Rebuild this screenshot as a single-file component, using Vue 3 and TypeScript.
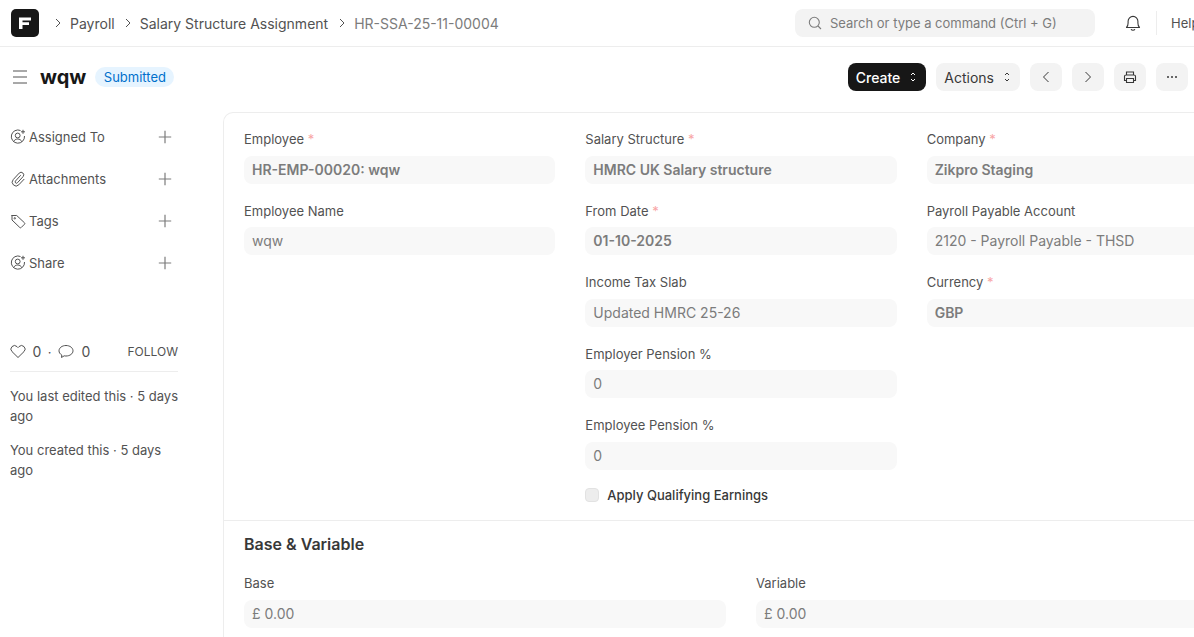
<script setup lang="ts">
interface Field {
  label: string
  value: string
  required?: boolean
  bold?: boolean
}

const columns: Field[][] = [
  [
    { label: 'Employee', value: 'HR-EMP-00020: wqw', required: true, bold: true },
    { label: 'Employee Name', value: 'wqw' }
  ],
  [
    { label: 'Salary Structure', value: 'HMRC UK Salary structure', required: true, bold: true },
    { label: 'From Date', value: '01-10-2025', required: true, bold: true },
    { label: 'Income Tax Slab', value: 'Updated HMRC 25-26' },
    { label: 'Employer Pension %', value: '0' },
    { label: 'Employee Pension %', value: '0' }
  ],
  [
    { label: 'Company', value: 'Zikpro Staging', required: true, bold: true },
    { label: 'Payroll Payable Account', value: '2120 - Payroll Payable - THSD' },
    { label: 'Currency', value: 'GBP', required: true, bold: true }
  ]
]

const pay: Field[] = [
  { label: 'Base', value: '£ 0.00' },
  { label: 'Variable', value: '£ 0.00' }
]

const sideItems = [
  { label: 'Assigned To', icon: 'user' },
  { label: 'Attachments', icon: 'clip' },
  { label: 'Tags', icon: 'tag' },
  { label: 'Share', icon: 'user' }
]
</script>

<template>
  <div class="app">
    <header class="navbar">
      <div class="logo">
        <svg width="14" height="14" viewBox="0 0 14 14"><path d="M1 1.500h12v3H4.500v1.700H11v2.700H4.500V13H1z" fill="#fff" /></svg>
      </div>
      <nav class="crumbs">
        <svg class="chev" width="8" height="10" viewBox="0 0 8 10"><path d="M2 1l4 4-4 4" /></svg>
        <span class="tight">Payroll</span>
        <svg class="chev" width="8" height="10" viewBox="0 0 8 10"><path d="M2 1l4 4-4 4" /></svg>
        <span>Salary Structure Assignment</span>
        <svg class="chev" width="8" height="10" viewBox="0 0 8 10"><path d="M2 1l4 4-4 4" /></svg>
        <span class="current">HR-SSA-25-11-00004</span>
      </nav>
      <div class="search">
        <svg width="14" height="14" viewBox="0 0 14 14" fill="none" stroke="#7c7c7c" stroke-width="1.100"><circle cx="6.300" cy="6.300" r="5" /><path d="M10 10l3 3" /></svg>
        <span>Search or type a command (Ctrl + G)</span>
      </div>
      <svg class="bell" width="16" height="18" viewBox="0 0 16 18" fill="none" stroke="#383838" stroke-width="1.100">
        <path d="M1.500 13.500c1.200-1.200 1.600-2.400 1.600-4.500V7.300a4.900 4.900 0 0 1 9.800 0V9c0 2.100.4 3.300 1.600 4.500z" stroke-linejoin="round" />
        <path d="M6.300 15.600c.4.800 3 .8 3.400 0" stroke-linecap="round" />
      </svg>
      <div class="nav-sep"></div>
      <span class="help">Help</span>
    </header>

    <div class="page-head">
      <div class="title-area">
        <svg width="14" height="14" viewBox="0 0 14 14" fill="none" stroke="#525252" stroke-width="1"><path d="M0 1h14M0 7h14M0 13h14" /></svg>
        <h1>wqw</h1>
        <span class="badge">Submitted</span>
      </div>
      <div class="actions">
        <button class="btn primary">
          Create
          <svg width="8" height="12" viewBox="0 0 8 12" fill="none" stroke="#fff" stroke-width="1"><path d="M2 4l2-2 2 2M2 8l2 2 2-2" /></svg>
        </button>
        <button class="btn">
          Actions
          <svg width="8" height="12" viewBox="0 0 8 12" fill="none" stroke="#383838" stroke-width="1"><path d="M2 4l2-2 2 2M2 8l2 2 2-2" /></svg>
        </button>
        <button class="btn icon">
          <svg width="8" height="12" viewBox="0 0 8 12" fill="none" stroke="#383838" stroke-width="1"><path d="M6.500 1L1.500 6l5 5" /></svg>
        </button>
        <button class="btn icon">
          <svg width="8" height="12" viewBox="0 0 8 12" fill="none" stroke="#383838" stroke-width="1"><path d="M1.500 1l5 5-5 5" /></svg>
        </button>
        <button class="btn icon">
          <svg width="14" height="14" viewBox="0 0 14 14" fill="none" stroke="#383838" stroke-width="1.100"><path d="M3.500 5V2h7v3M3.500 10.500h-2V6.500A1.500 1.500 0 0 1 3 5h8a1.500 1.500 0 0 1 1.500 1.500v4h-2" /><path d="M3.500 8.500h7V12.500h-7z" /></svg>
        </button>
        <button class="btn icon">
          <svg width="12" height="4" viewBox="0 0 12 4" fill="#383838"><circle cx="2" cy="2" r="1" /><circle cx="6" cy="2" r="1" /><circle cx="10" cy="2" r="1" /></svg>
        </button>
      </div>
    </div>

    <div class="body">
      <aside class="sidebar">
        <div v-for="item in sideItems" :key="item.label" class="side-item">
          <div class="side-label">
            <svg v-if="item.icon === 'user'" width="16" height="16" viewBox="0 0 16 16" fill="none" stroke="#525252" stroke-width="1">
              <path d="M10.500 1.500A6.600 6.600 0 1 0 14.500 7" />
              <circle cx="7.700" cy="6.500" r="2.400" />
              <path d="M3.500 13c.7-2 2.300-3 4.200-3s3.400 1 4.200 2.800" />
              <path d="M13 .8v4M11 2.800h4" />
            </svg>
            <svg v-else-if="item.icon === 'clip'" width="16" height="16" viewBox="0 0 16 16" fill="none" stroke="#525252" stroke-width="1">
              <path d="M10.500 4.500L5.500 10a1.300 1.300 0 0 0 1.900 1.800L13 5.700a2.600 2.600 0 0 0-3.800-3.600L3.300 8.500a3.800 3.800 0 0 0 5.500 5.300L14 8.300" stroke-linecap="round" />
            </svg>
            <svg v-else width="16" height="16" viewBox="0 0 16 16" fill="none" stroke="#525252" stroke-width="1">
              <path d="M1.500 2.500h5.200l7.800 7.300a1 1 0 0 1 0 1.400l-3.300 3.300a1 1 0 0 1-1.400 0L2 7V3z" stroke-linejoin="round" />
              <circle cx="4.800" cy="5.300" r=".7" />
            </svg>
            <span>{{ item.label }}</span>
          </div>
          <svg class="plus" width="14" height="14" viewBox="0 0 14 14" stroke="#7c7c7c" stroke-width="1.200"><path d="M7 .8v12.400M.8 7h12.400" /></svg>
        </div>

        <div class="likes">
          <div class="counts">
            <svg width="16" height="15" viewBox="0 0 16 15" fill="none" stroke="#525252" stroke-width="1"><path d="M8 13.500L2 7.600a3.500 3.500 0 0 1 0-5 3.600 3.600 0 0 1 5 0l1 1 1-1a3.600 3.600 0 0 1 5 0 3.500 3.500 0 0 1 0 5z" stroke-linejoin="round" /></svg>
            <span class="num">0</span>
            <span class="dot">·</span>
            <svg class="comment" width="16" height="15" viewBox="0 0 16 15" fill="none" stroke="#525252" stroke-width="1"><path d="M8 1.500c3.800 0 7 2.300 7 5.300s-3.200 5.200-7 5.200c-.6 0-1.200 0-1.800-.2L3.500 13.500l.3-2.500C2 10 1 8.500 1 6.800c0-3 3.200-5.300 7-5.300z" stroke-linejoin="round" /></svg>
            <span class="num">0</span>
          </div>
          <span class="follow">FOLLOW</span>
        </div>
        <p class="activity">You last edited this · 5 days ago</p>
        <p class="activity">You created this · 5 days ago</p>
      </aside>

      <main class="form-card">
        <section class="section first">
          <div class="grid three">
            <div v-for="(col, i) in columns" :key="i" class="col">
              <div v-for="f in col" :key="f.label" class="field">
                <label>{{ f.label }}<span v-if="f.required" class="req"> *</span></label>
                <div class="input" :class="{ bold: f.bold }">{{ f.value }}</div>
              </div>
              <div v-if="i === 1" class="check">
                <span class="box"></span>
                <span>Apply Qualifying Earnings</span>
              </div>
            </div>
          </div>
        </section>
        <section class="section second">
          <h2>Base &amp; Variable</h2>
          <div class="grid two">
            <div v-for="f in pay" :key="f.label" class="field">
              <label>{{ f.label }}</label>
              <div class="input">{{ f.value }}</div>
            </div>
          </div>
        </section>
      </main>
    </div>
  </div>
</template>

<style>
html, body {
  margin: 0;
  background: #fff;
  overflow: hidden;
}
</style>

<style scoped>
.app {
  width: 1194px;
  height: 637px;
  overflow: hidden;
  font-family: Inter, "Liberation Sans", sans-serif;
  font-size: 13px;
  color: #525252;
}

.navbar {
  height: 46px;
  display: flex;
  align-items: center;
  padding-left: 11px;
  border-bottom: 1px solid #ededed;
  white-space: nowrap;
}

.logo {
  width: 28px;
  height: 28px;
  flex: none;
  border-radius: 5px;
  background: #171717;
  display: flex;
  align-items: center;
  justify-content: center;
}

.crumbs {
  display: flex;
  align-items: center;
  flex: none;
  margin-left: 15px;
  font-size: 14px;
  color: #525252;
  width: 741px;
}

.chev {
  fill: none;
  stroke: #525252;
  stroke-width: 1;
  margin-right: 8px;
}

.crumbs span {
  margin-right: 10px;
}

.crumbs .tight {
  margin-right: 9px;
}

.current {
  color: #7c7c7c;
}

.search {
  width: 300px;
  height: 28px;
  flex: none;
  box-sizing: border-box;
  padding-left: 13px;
  background: #f3f3f3;
  border-radius: 8px;
  display: flex;
  align-items: center;
  gap: 8px;
  color: #7c7c7c;
}

.bell {
  margin-left: 30px;
  flex: none;
}

.nav-sep {
  width: 1px;
  height: 24px;
  background: #ededed;
  margin-left: 15px;
  flex: none;
}

.help {
  margin-left: 14px;
  font-size: 13px;
}

.page-head {
  height: 65px;
  display: flex;
  align-items: center;
  justify-content: space-between;
  padding: 0 6px 5px 13px;
  box-sizing: border-box;
}

.title-area {
  display: flex;
  align-items: center;
}

h1 {
  margin: 0 0 0 13px;
  font-size: 20px;
  line-height: 1;
  font-weight: 700;
  color: #171717;
}

.badge {
  margin-left: 9px;
  height: 20px;
  padding: 0 8.500px;
  display: flex;
  align-items: center;
  border-radius: 10px;
  background: #e6f4ff;
  color: #0070cc;
  font-size: 13px;
}

.actions {
  display: flex;
  gap: 10px;
}

.btn {
  height: 28px;
  padding: 0 9px 0 8px;
  border: 0;
  border-radius: 8px;
  background: #f3f3f3;
  color: #383838;
  font: inherit;
  font-size: 14px;
  display: flex;
  align-items: center;
  gap: 9px;
}

.btn.primary {
  background: #171717;
  color: #fff;
  font-weight: 500;
}

.btn.icon {
  width: 32px;
  padding: 0;
  justify-content: center;
}

.body {
  display: flex;
}

.sidebar {
  width: 168px;
  flex: none;
  margin-left: 10px;
  margin-right: 45px;
}

.side-item {
  height: 42px;
  display: flex;
  align-items: center;
  justify-content: space-between;
  padding-right: 6px;
}

.side-label {
  display: flex;
  align-items: center;
  gap: 3px;
}

.side-item:first-child {
  margin-top: 4px;
}

.likes {
  margin-top: 48px;
  height: 40px;
  display: flex;
  align-items: center;
  justify-content: space-between;
  border-bottom: 1px solid #ededed;
  box-sizing: border-box;
}

.counts {
  display: flex;
  align-items: center;
  gap: 6.500px;
}

.comment {
  margin-right: 1px;
}

.num {
  font-size: 14px;
}

.follow {
  font-size: 12px;
  color: #525252;
}

.activity {
  margin: 14px 0 0;
  font-size: 13px;
  line-height: 20px;
  width: 168px;
}

.form-card {
  width: 1040px;
  flex: none;
  border: 1px solid #ededed;
  border-bottom: 0;
  border-radius: 10px 10px 0 0;
  height: 540px;
}

.section {
  padding: 0 20px;
}

.section.first {
  padding-top: 16px;
  height: 408px;
  box-sizing: border-box;
  border-bottom: 1px solid #ededed;
}

.section.second {
  padding-top: 13px;
}

h2 {
  margin: 0 0 19px;
  font-size: 16px;
  line-height: 20px;
  font-weight: 600;
  color: #383838;
}

.grid {
  display: grid;
  column-gap: 30px;
  width: 994px;
}

.three {
  grid-template-columns: repeat(3, 1fr);
}

.two {
  grid-template-columns: repeat(2, 1fr);
}

.field {
  height: 71.500px;
}

label {
  display: block;
  font-size: 13px;
  line-height: 20px;
  margin-bottom: 6.900px;
}

.req {
  color: #f8a5a5;
}

.input {
  height: 28px;
  line-height: 28px;
  padding: 0 8px;
  border-radius: 8px;
  background: #f8f8f8;
  font-size: 14px;
  color: #7c7c7c;
}

.input.bold {
  font-weight: 600;
}

.check {
  display: flex;
  align-items: center;
  gap: 8px;
  margin-top: -2px;
  color: #383838;
  font-size: 13px;
  font-weight: 500;
  height: 20px;
}

.box {
  width: 12px;
  height: 12px;
  flex: none;
  border: 1px solid #e2e2e2;
  border-radius: 4px;
  background: #ededed;
}
</style>
